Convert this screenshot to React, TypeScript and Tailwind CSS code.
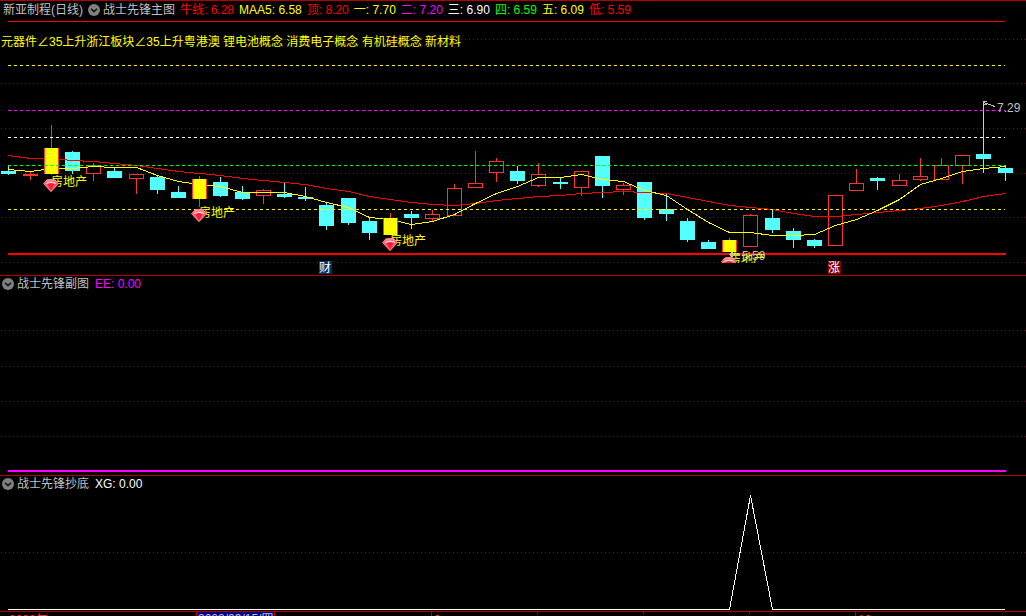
import React from 'react';

type Kind = 'up' | 'down' | 'signal' | 'flat';
// x, high, body top, body bottom, low, kind
type Candle = [number, number, number, number, number, Kind];

const candles: Candle[] = [
  [8, 166, 171, 174, 175, 'down'],
  [30, 171, 174, 176, 180, 'flat'],
  [51, 125, 148, 174, 175, 'signal'],
  [72, 151, 152, 171, 174, 'down'],
  [93, 163, 165, 174, 181, 'up'],
  [114, 168, 171, 178, 178, 'down'],
  [136, 174, 174, 179, 194, 'up'],
  [157, 176, 177, 190, 194, 'down'],
  [178, 186, 192, 198, 198, 'down'],
  [199, 176, 179, 199, 207, 'signal'],
  [220, 177, 182, 196, 197, 'down'],
  [242, 186, 192, 199, 200, 'down'],
  [263, 189, 190, 196, 204, 'up'],
  [284, 182, 194, 197, 198, 'down'],
  [305, 187, 197, 199, 201, 'down'],
  [326, 202, 205, 226, 230, 'down'],
  [348, 198, 198, 223, 225, 'down'],
  [369, 218, 221, 233, 240, 'down'],
  [390, 213, 218, 235, 235, 'signal'],
  [411, 211, 214, 218, 229, 'down'],
  [432, 210, 214, 219, 221, 'up'],
  [454, 184, 188, 216, 216, 'up'],
  [475, 151, 183, 188, 188, 'up'],
  [496, 158, 161, 173, 182, 'up'],
  [517, 166, 171, 181, 184, 'down'],
  [538, 163, 174, 186, 187, 'up'],
  [560, 178, 182, 184, 189, 'down'],
  [581, 171, 171, 188, 196, 'up'],
  [602, 156, 156, 186, 198, 'down'],
  [623, 183, 185, 190, 195, 'up'],
  [644, 182, 182, 218, 220, 'down'],
  [666, 194, 209, 214, 221, 'down'],
  [687, 218, 221, 240, 242, 'down'],
  [708, 240, 242, 249, 249, 'down'],
  [729, 238, 240, 252, 252, 'signal'],
  [750, 214, 215, 247, 247, 'up'],
  [772, 209, 218, 230, 233, 'down'],
  [793, 228, 231, 240, 248, 'down'],
  [814, 239, 240, 246, 248, 'down'],
  [835, 195, 195, 246, 246, 'up'],
  [856, 169, 183, 191, 191, 'up'],
  [877, 177, 178, 181, 190, 'down'],
  [899, 174, 180, 186, 186, 'up'],
  [920, 158, 176, 180, 181, 'up'],
  [941, 158, 165, 180, 180, 'up'],
  [962, 155, 155, 166, 184, 'up'],
  [983, 103, 154, 159, 173, 'down'],
  [1005, 165, 168, 173, 181, 'down'],
];

const bullLine = [
  155, 158, 158, 160, 161, 163, 165, 168, 171, 173, 175, 178, 180, 182, 184, 188,
  191, 196, 199, 202, 204, 205, 203, 200, 198, 196, 195, 193, 192, 191, 192, 193,
  197, 201, 205, 207, 209, 213, 216, 216, 214, 212, 210, 208, 205, 201, 196, 193,
];

const maLine = [
  169, 171, 168, 168, 166, 167, 167, 175, 181, 184, 186, 192, 192, 192, 196, 202,
  207, 217, 219, 224, 221, 214, 203, 193, 186, 177, 177, 174, 179, 181, 190, 195,
  209, 222, 232, 232, 235, 235, 234, 225, 219, 210, 199, 184, 178, 171, 168, 166,
];

const levels = [
  { y: 65, color: '#ffff00' },
  { y: 110, color: '#ff00ff' },
  { y: 137, color: '#ffffff' },
  { y: 165, color: '#00ff00' },
  { y: 209, color: '#ffff00' },
];

// x, gem top, label baseline
const signals = [
  [51, 179, 186],
  [199, 209, 217],
  [390, 238, 245],
  [729, 257, 263],
];

const legend = [
  { label: '牛线: 6.28', className: 'text-[#ff0000]' },
  { label: 'MAA5: 6.58', className: 'text-[#ffff00]' },
  { label: '顶: 8.20', className: 'text-[#ff0000]' },
  { label: '一: 7.70', className: 'text-[#ffff00]' },
  { label: '二: 7.20', className: 'text-[#ff00ff]' },
  { label: '三: 6.90', className: 'text-white' },
  { label: '四: 6.59', className: 'text-[#00ff00]' },
  { label: '五: 6.09', className: 'text-[#ffff00]' },
  { label: '低: 5.59', className: 'text-[#ff0000]' },
];

const toPoints = (values: number[]) =>
  values.map((y, i) => `${candles[i][0] + 0.5},${y + 0.5}`).join(' ');

const PanelName = ({ name }: { name: string }) => (
  <div className="flex items-center gap-[3px]">
    <button type="button" aria-label={name} className="shrink-0">
      <svg viewBox="0 0 12 12" className="block h-3 w-3">
        <circle cx="6" cy="6" r="6" fill="#808080" />
        <path d="M3 4.8 6 7.6 9 4.8" fill="none" stroke="#101010" strokeWidth="1.5" />
      </svg>
    </button>
    <h2>{name}</h2>
  </div>
);

const GridLine = ({ y }: { y: number }) => (
  <path
    d={`M1 ${y + 0.5}H1026`}
    stroke="#a00000"
    strokeDasharray="1 3"
    shapeRendering="crispEdges"
  />
);

const Gem = ({ x, y }: { x: number; y: number }) => (
  <g transform={`translate(${x - 8} ${y})`}>
    <path d="M4 0.500Q8-0.500 12 0.500L16 4.500 8 13 0 4.500z" fill="#f05a68" />
    <path d="M4 0.500Q8-0.500 12 0.500L15 3.500Q8 0.500 1 3.500z" fill="#ff8c94" />
    <path d="M2 4.500Q8 0.500 14 4.500L12 5Q8 3 4 5z" fill="#ffd0d4" />
    <path d="M4.500 5Q8 3.500 11.500 5L8 12z" fill="#ff1838" />
    <path d="M0.500 4.500 8 12.500l7.500-8" fill="none" stroke="#ff9098" strokeWidth="0.8" />
  </g>
);

const CandleBar = ({ candle }: { candle: Candle }) => {
  const [x, high, top, bottom, low, kind] = candle;
  const color = kind === 'down' ? '#54ffff' : '#ff3232';
  return (
    <g shapeRendering="crispEdges">
      <rect x={x} y={high} width="1" height={top - high} fill={color} />
      <rect x={x} y={bottom} width="1" height={low - bottom} fill={color} />
      {kind === 'up' ? (
        <rect
          x={x - 6.5}
          y={top + 0.5}
          width="14"
          height={bottom - top - 1}
          fill="none"
          stroke={color}
        />
      ) : (
        <rect x={x - 7} y={top} width="15" height={bottom - top} fill={color} />
      )}
      {kind === 'signal' && (
        <rect x={x - 6} y={top} width="13" height={bottom - top} fill="#ffff00" />
      )}
    </g>
  );
};

const MainChart = () => (
  <svg viewBox="0 19 1026 256" className="block w-full text-xs">
    {[39, 83, 128, 173, 217, 262].map((y) => (
      <GridLine key={y} y={y} />
    ))}
    <path d="M8 21.500H1005" stroke="#ff0000" shapeRendering="crispEdges" />

    {candles
      .filter((c) => c[5] !== 'signal')
      .map((c) => (
        <CandleBar key={c[0]} candle={c} />
      ))}
    <g fill="none" shapeRendering="crispEdges">
      <polyline points={toPoints(bullLine)} stroke="#ff0000" />
      <polyline points={toPoints(maLine)} stroke="#ffff00" />
    </g>
    {candles
      .filter((c) => c[5] === 'signal')
      .map((c) => (
        <CandleBar key={c[0]} candle={c} />
      ))}

    {levels.map(({ y, color }) => (
      <path
        key={y}
        d={`M8 ${y + 0.5}H1005`}
        stroke={color}
        strokeDasharray="3 3"
        shapeRendering="crispEdges"
      />
    ))}
    <rect x="8" y="253" width="998" height="2" fill="#ff0000" shapeRendering="crispEdges" />

    <text x="1" y="46" fill="#ffff00">
      元器件∠35上升浙江板块∠35上升粤港澳 锂电池概念 消费电子概念 有机硅概念 新材料
    </text>

    <clipPath id="signal-area">
      <rect x="0" y="19" width="1026" height="244" />
    </clipPath>
    <g clipPath="url(#signal-area)">
      {signals.map(([x, gemY, textY]) => (
        <g key={x}>
          <text x={x} y={textY} fill="#ffff00">
            房地产
          </text>
          <Gem x={x} y={gemY} />
        </g>
      ))}
    </g>

    {/* highest and lowest price */}
    <g fill="none" stroke="#c0c0c0" shapeRendering="crispEdges">
      <path d="M983.500 102.500 995 106.500M983.500 105V101.500H987M984 104.500H987" />
      <path d="M729.500 254.500H740M729.500 254.500 733 252M729.500 254.500 733 257" />
    </g>
    <text x="997" y="112" fill="#c0c0c0">
      7.29
    </text>
    <text x="742" y="260" fill="#c0c0c0">
      5.59
    </text>

    <rect x="319" y="261" width="13" height="13" fill="#003366" />
    <text x="319" y="272" fill="#ffffff">
      财
    </text>
    <rect x="828" y="261" width="13" height="13" fill="#800000" />
    <text x="828" y="272" fill="#ffffff">
      涨
    </text>
  </svg>
);

const TimeAxis = () => (
  <svg viewBox="0 0 1026 4" className="block w-full overflow-hidden text-xs">
    <g fill="#c00000" shapeRendering="crispEdges">
      <rect x="431" y="0" width="1" height="4" />
      <rect x="537" y="0" width="1" height="2" />
      <rect x="643" y="0" width="1" height="2" />
      <rect x="749" y="0" width="1" height="2" />
      <rect x="855" y="0" width="1" height="4" />
    </g>
    <g fill="#ff3232">
      <text x="9" y="12">2022年</text>
      <text x="434" y="12">9</text>
      <text x="858" y="12">10</text>
    </g>
    <rect x="196" y="0" width="79" height="4" fill="#c00000" />
    <rect x="197" y="0" width="77" height="4" fill="#000080" />
    <text x="198" y="11" fill="#c0c0c0">
      2022/09/15/四
    </text>
  </svg>
);

const App = () => {
  return (
    <main className="min-h-screen overflow-hidden bg-black font-['Liberation_Sans','Noto_Sans_CJK_SC',sans-serif] text-xs text-[#c0c0c0]">
      <section className="border-y border-[#b00000]">
        <header className="flex h-[18px] items-center gap-[5px] pl-[3px] whitespace-nowrap">
          <h1>新亚制程(日线)</h1>
          <PanelName name="战士先锋主图" />
          {legend.map(({ label, className }) => (
            <span key={label} className={className}>
              {label}
            </span>
          ))}
        </header>
        <MainChart />
      </section>

      <section className="border-b border-[#b00000]">
        <header className="flex h-4 items-center gap-[6px] pl-0.5">
          <PanelName name="战士先锋副图" />
          <span className="text-[#ff00ff]">EE: 0.00</span>
        </header>
        <svg viewBox="0 292 1026 183" className="block w-full">
          {[330, 366, 401, 436].map((y) => (
            <GridLine key={y} y={y} />
          ))}
          <rect x="8" y="470" width="998" height="2" fill="#ff00ff" />
        </svg>
      </section>

      <section className="border-b border-[#b00000]">
        <header className="flex h-4 items-center gap-[6px] pl-0.5">
          <PanelName name="战士先锋抄底" />
          <span className="text-white">XG: 0.00</span>
        </header>
        <svg viewBox="0 492 1026 119" className="block w-full">
          <GridLine y={552} />
          <polyline
            points="8,609.5 729.5,609.5 750.5,495.5 772.5,609.5 1005,609.5"
            fill="none"
            stroke="#ffffff"
            shapeRendering="crispEdges"
          />
        </svg>
      </section>

      <TimeAxis />
    </main>
  );
};

export default App;
